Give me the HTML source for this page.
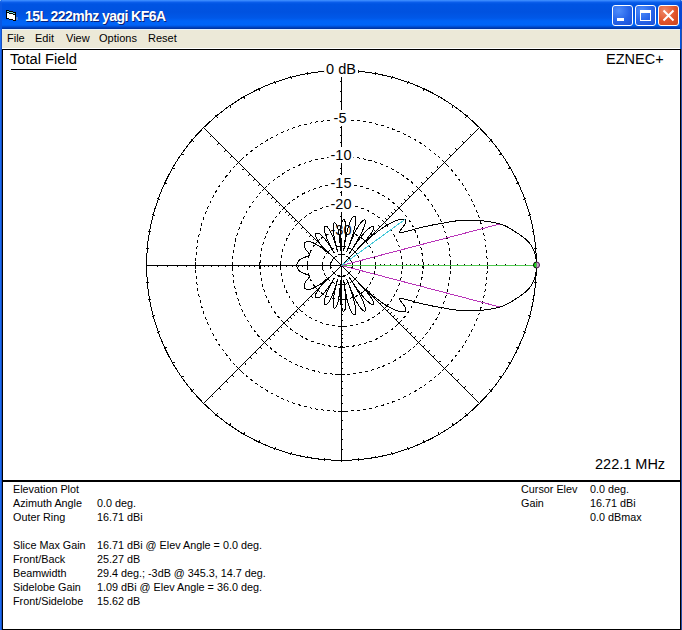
<!DOCTYPE html>
<html><head><meta charset="utf-8">
<style>
*{margin:0;padding:0;box-sizing:border-box}
html,body{width:682px;height:630px;overflow:hidden;background:#fff;font-family:"Liberation Sans",sans-serif}
.win{position:absolute;left:0;top:0;width:682px;height:630px;background:linear-gradient(to right,#1A6BF5 0,#1A6BF5 1px,#1850C0 1px,#1850C0 2px,#0054E3 2px,#0054E3 681px,#2850A8 681px)}
.title{position:absolute;left:0;top:0;width:682px;height:29px;
 background:linear-gradient(to bottom,#4596FF 0px,#2B7BFA 1px,#0A5DEA 2.5px,#0054E3 4px,#0052E0 12px,#0058E8 18px,#0063F7 21px,#0064F8 25px,#0050D8 26.5px,#003AAE 28px,#00319C 29px)}
.ttext{position:absolute;left:25px;top:8px;font:bold 14px "Liberation Sans",sans-serif;letter-spacing:-0.55px;color:#fff;white-space:nowrap;text-shadow:1px 1px 0 #0A1F77}
.menu{position:absolute;left:2px;top:29px;width:678px;height:20px;background:#ECE9D8;border-top:1px solid #E6F2FF;border-bottom:1px solid #FFFFFF}
.mi{position:absolute;top:2px;font-size:11px;color:#000;white-space:nowrap}
.plot{position:absolute;left:2px;top:49px;width:679px;height:433px;background:#fff;border:1px solid #000;border-right-width:1px}
.info{position:absolute;left:2px;top:480px;width:679px;height:150px;background:#fff;border-top:2px solid #000;border-left:1px solid #000;border-right:1px solid #000;border-bottom:1px solid #000}
.t{position:absolute;white-space:nowrap;color:#000}
.s11{font-size:10.8px}
.lab{position:absolute;transform:translateX(-50%);font-size:14.5px;line-height:16px;background:#fff;padding:0 2px;white-space:nowrap}
.btn{position:absolute;top:5px;width:21px;height:21px;border:1px solid #fff;border-radius:3px}
</style></head><body>
<div class="win">
 <div class="title"></div>
 <svg style="position:absolute;left:0;top:0" width="24" height="24" shape-rendering="crispEdges">
  <rect x="6" y="10" width="3" height="9" fill="#000"/><rect x="9" y="11" width="4" height="9" fill="#000"/><rect x="13" y="12" width="3" height="9" fill="#000"/>
  <rect x="7" y="11" width="2" height="1" fill="#74D6DA"/><rect x="9" y="12" width="4" height="1" fill="#74D6DA"/><rect x="13" y="13" width="2" height="1" fill="#74D6DA"/>
  <rect x="7" y="13" width="2" height="5" fill="#fff"/><rect x="9" y="14" width="4" height="5" fill="#fff"/><rect x="13" y="15" width="2" height="5" fill="#fff"/>
  <rect x="16" y="17" width="2" height="3" fill="#7F97C8" opacity="0.6"/>
 </svg>
 <div style="position:absolute;left:0;top:0;width:2px;height:29px;background:linear-gradient(to bottom,#2A78F0 0,#0A58E4 3px,#0A56E0 100%)"></div>
 <div style="position:absolute;left:0;top:0;width:1px;height:1px;background:#8CBCF4"></div>
 <div style="position:absolute;left:680px;top:0;width:2px;height:29px;background:linear-gradient(to bottom,#2A70E8 0,#0848D4 3px,#0846D0 100%)"></div>
 <div style="position:absolute;left:681px;top:0;width:1px;height:1px;background:#8CBCF4"></div>
 <div class="ttext">15L 222mhz yagi KF6A</div>
 <div class="btn" style="left:612px;background:radial-gradient(circle at 30% 25%,#4F8DFB 0%,#2663E8 55%,#1A4FD6 100%)"><div style="position:absolute;left:4px;top:12px;width:7px;height:3px;background:#fff"></div></div>
 <div class="btn" style="left:635px;background:radial-gradient(circle at 30% 25%,#4F8DFB 0%,#2663E8 55%,#1A4FD6 100%)"><div style="position:absolute;left:4px;top:4px;width:11px;height:11px;border:1px solid #fff;border-top-width:3px"></div></div>
 <div class="btn" style="left:658px;background:radial-gradient(circle at 30% 25%,#F08A6A 0%,#E0542A 55%,#C9441B 100%)">
  <svg style="position:absolute;left:3px;top:3px" width="13" height="13" viewBox="0 0 13 13"><path d="M1.5 1.5L11.5 11.5M11.5 1.5L1.5 11.5" stroke="#fff" stroke-width="2"/></svg>
 </div>
 <div class="menu">
  <div class="mi" style="left:5px">File</div>
  <div class="mi" style="left:33px">Edit</div>
  <div class="mi" style="left:64px">View</div>
  <div class="mi" style="left:97px">Options</div>
  <div class="mi" style="left:146px">Reset</div>
 </div>
 <div class="plot"></div>
 <div class="info"></div>
 <svg style="position:absolute;left:0;top:0" width="682" height="630" viewBox="0 0 682 630" shape-rendering="crispEdges">
<circle cx="341.5" cy="265.5" r="195" fill="none" stroke="#000" stroke-width="1"/>
<circle cx="341.5" cy="265.5" r="145.7" fill="none" stroke="#000" stroke-width="1" stroke-dasharray="3 3"/>
<circle cx="341.5" cy="265.5" r="108.9" fill="none" stroke="#000" stroke-width="1" stroke-dasharray="3 3"/>
<circle cx="341.5" cy="265.5" r="81.4" fill="none" stroke="#000" stroke-width="1" stroke-dasharray="3 3"/>
<circle cx="341.5" cy="265.5" r="60.8" fill="none" stroke="#000" stroke-width="1" stroke-dasharray="3 3"/>
<circle cx="341.5" cy="265.5" r="34.0" fill="none" stroke="#000" stroke-width="1" stroke-dasharray="3 3"/>
<circle cx="341.5" cy="265.5" r="19.0" fill="none" stroke="#000" stroke-width="1" stroke-dasharray="3 3"/>
<circle cx="341.5" cy="265.5" r="10.6" fill="none" stroke="#000" stroke-width="1" stroke-dasharray="3 3"/>
<path d="M534.5 265.5L537.5 265.5M533.8 248.7L536.8 248.4M531.6 232.0L534.5 231.5M527.9 215.5L530.8 214.8M522.9 199.5L525.7 198.5M516.4 183.9L519.1 182.7M508.6 169.0L511.2 167.5M499.6 154.8L502.1 153.1M489.3 141.4L491.6 139.5M478.0 129.0L480.1 126.9M465.6 117.7L467.5 115.4M452.2 107.4L453.9 104.9M438.0 98.4L439.5 95.8M423.1 90.6L424.3 87.9M407.5 84.1L408.5 81.3M391.5 79.1L392.2 76.2M375.0 75.4L375.5 72.5M358.3 73.2L358.6 70.2M341.5 72.5L341.5 69.5M324.7 73.2L324.4 70.2M308.0 75.4L307.5 72.5M291.5 79.1L290.8 76.2M275.5 84.1L274.5 81.3M259.9 90.6L258.7 87.9M245.0 98.4L243.5 95.8M230.8 107.4L229.1 104.9M217.4 117.7L215.5 115.4M205.0 129.0L202.9 126.9M193.7 141.4L191.4 139.5M183.4 154.8L180.9 153.1M174.4 169.0L171.8 167.5M166.6 183.9L163.9 182.7M160.1 199.5L157.3 198.5M155.1 215.5L152.2 214.8M151.4 232.0L148.5 231.5M149.2 248.7L146.2 248.4M148.5 265.5L145.5 265.5M149.2 282.3L146.2 282.6M151.4 299.0L148.5 299.5M155.1 315.5L152.2 316.2M160.1 331.5L157.3 332.5M166.6 347.1L163.9 348.3M174.4 362.0L171.8 363.5M183.4 376.2L180.9 377.9M193.7 389.6L191.4 391.5M205.0 402.0L202.9 404.1M217.4 413.3L215.5 415.6M230.8 423.6L229.1 426.1M245.0 432.6L243.5 435.2M259.9 440.4L258.7 443.1M275.5 446.9L274.5 449.7M291.5 451.9L290.8 454.8M308.0 455.6L307.5 458.5M324.7 457.8L324.4 460.8M341.5 458.5L341.5 461.5M358.3 457.8L358.6 460.8M375.0 455.6L375.5 458.5M391.5 451.9L392.2 454.8M407.5 446.9L408.5 449.7M423.1 440.4L424.3 443.1M438.0 432.6L439.5 435.2M452.2 423.6L453.9 426.1M465.6 413.3L467.5 415.6M478.0 402.0L480.1 404.1M489.3 389.6L491.6 391.5M499.6 376.2L502.1 377.9M508.6 362.0L511.2 363.5M516.4 347.1L519.1 348.3M522.9 331.5L525.7 332.5M527.9 315.5L530.8 316.2M531.6 299.0L534.5 299.5M533.8 282.3L536.8 282.6" stroke="#000" stroke-width="1"/>
<path d="M146 265.5H537M341.5 70V461M203.6 127.6L479.4 403.4M203.6 403.4L479.4 127.6" stroke="#000" stroke-width="1"/>
<path d="M487.5 262v7M338 411.5h7M195.5 262v7M338 119.5h7M442.3 160.3L446.7 164.7M236.3 164.7L240.7 160.3M236.3 366.3L240.7 370.7M442.3 370.7L446.7 366.3M450.5 262v7M338 374.5h7M232.5 262v7M338 156.5h7M416.3 186.3L420.7 190.7M262.3 190.7L266.7 186.3M262.3 340.3L266.7 344.7M416.3 344.7L420.7 340.3M423.5 262v7M338 347.5h7M259.5 262v7M338 183.5h7M396.8 205.8L401.2 210.2M281.8 210.2L286.2 205.8M281.8 320.8L286.2 325.2M396.8 325.2L401.2 320.8M402.5 262v7M338 326.5h7M280.5 262v7M338 204.5h7M382.3 220.3L386.7 224.7M296.3 224.7L300.7 220.3M296.3 306.3L300.7 310.7M382.3 310.7L386.7 306.3M375.5 262v7M338 299.5h7M307.5 262v7M338 231.5h7M363.3 239.3L367.7 243.7M315.3 243.7L319.7 239.3M315.3 287.3L319.7 291.7M363.3 291.7L367.7 287.3M360.5 262v7M338 284.5h7M322.5 262v7M338 246.5h7M352.7 249.9L357.1 254.3M325.9 254.3L330.3 249.9M325.9 276.7L330.3 281.1M352.7 281.1L357.1 276.7M352.5 262v7M338 276.5h7M330.5 262v7M338 254.5h7M346.8 255.8L351.2 260.2M331.8 260.2L336.2 255.8M331.8 270.8L336.2 275.2M346.8 275.2L351.2 270.8" stroke="#000" stroke-width="1"/>
<path d="M525 264h1v1h-1zM157 266h1v1h-1zM340 81h1v1h-1zM342 449h1v1h-1zM515 264h1v1h-1zM167 266h1v1h-1zM340 91h1v1h-1zM342 439h1v1h-1zM505 264h1v1h-1zM177 266h1v1h-1zM340 101h1v1h-1zM342 429h1v1h-1zM496 264h1v1h-1zM186 266h1v1h-1zM340 110h1v1h-1zM342 420h1v1h-1zM487 264h1v1h-1zM195 266h1v1h-1zM340 119h1v1h-1zM342 411h1v1h-1zM479 264h1v1h-1zM203 266h1v1h-1zM340 127h1v1h-1zM342 403h1v1h-1zM471 264h1v1h-1zM211 266h1v1h-1zM340 135h1v1h-1zM342 395h1v1h-1zM464 264h1v1h-1zM218 266h1v1h-1zM340 142h1v1h-1zM342 388h1v1h-1zM457 264h1v1h-1zM225 266h1v1h-1zM340 149h1v1h-1zM342 381h1v1h-1zM450 264h1v1h-1zM232 266h1v1h-1zM340 156h1v1h-1zM342 374h1v1h-1zM444 264h1v1h-1zM238 266h1v1h-1zM340 162h1v1h-1zM342 368h1v1h-1zM438 264h1v1h-1zM244 266h1v1h-1zM340 168h1v1h-1zM342 362h1v1h-1zM433 264h1v1h-1zM249 266h1v1h-1zM340 173h1v1h-1zM342 357h1v1h-1zM428 264h1v1h-1zM254 266h1v1h-1zM340 178h1v1h-1zM342 352h1v1h-1zM423 264h1v1h-1zM259 266h1v1h-1zM340 183h1v1h-1zM342 347h1v1h-1zM418 264h1v1h-1zM264 266h1v1h-1zM340 188h1v1h-1zM342 342h1v1h-1zM414 264h1v1h-1zM268 266h1v1h-1zM340 192h1v1h-1zM342 338h1v1h-1zM410 264h1v1h-1zM272 266h1v1h-1zM340 196h1v1h-1zM342 334h1v1h-1zM406 264h1v1h-1zM276 266h1v1h-1zM340 200h1v1h-1zM342 330h1v1h-1zM402 264h1v1h-1zM280 266h1v1h-1zM340 204h1v1h-1zM342 326h1v1h-1zM396 264h1v1h-1zM286 266h1v1h-1zM340 210h1v1h-1zM342 320h1v1h-1zM390 264h1v1h-1zM292 266h1v1h-1zM340 216h1v1h-1zM342 314h1v1h-1zM384 264h1v1h-1zM298 266h1v1h-1zM340 222h1v1h-1zM342 308h1v1h-1zM380 264h1v1h-1zM302 266h1v1h-1zM340 226h1v1h-1zM342 304h1v1h-1zM470 134h1v1h-1zM470 134h1v1h-1zM463 142h1v1h-1zM462 141h1v1h-1zM456 149h1v1h-1zM455 148h1v1h-1zM450 155h1v1h-1zM449 154h1v1h-1zM443 161h1v1h-1zM443 161h1v1h-1zM437 167h1v1h-1zM437 166h1v1h-1zM432 173h1v1h-1zM431 172h1v1h-1zM427 178h1v1h-1zM426 177h1v1h-1zM422 183h1v1h-1zM421 182h1v1h-1zM417 187h1v1h-1zM417 187h1v1h-1zM413 192h1v1h-1zM412 191h1v1h-1zM409 196h1v1h-1zM408 195h1v1h-1zM405 200h1v1h-1zM404 199h1v1h-1zM401 203h1v1h-1zM401 203h1v1h-1zM398 207h1v1h-1zM397 206h1v1h-1zM395 210h1v1h-1zM394 209h1v1h-1zM392 213h1v1h-1zM391 212h1v1h-1zM389 216h1v1h-1zM388 215h1v1h-1zM386 219h1v1h-1zM385 218h1v1h-1zM383 221h1v1h-1zM383 221h1v1h-1zM379 226h1v1h-1zM378 225h1v1h-1zM374 230h1v1h-1zM374 230h1v1h-1zM371 234h1v1h-1zM370 233h1v1h-1zM367 237h1v1h-1zM367 237h1v1h-1zM210 136h1v1h-1zM210 136h1v1h-1zM218 143h1v1h-1zM217 144h1v1h-1zM225 150h1v1h-1zM224 151h1v1h-1zM231 156h1v1h-1zM230 157h1v1h-1zM237 163h1v1h-1zM237 163h1v1h-1zM243 169h1v1h-1zM242 169h1v1h-1zM249 174h1v1h-1zM248 175h1v1h-1zM254 179h1v1h-1zM253 180h1v1h-1zM259 184h1v1h-1zM258 185h1v1h-1zM263 189h1v1h-1zM263 189h1v1h-1zM268 193h1v1h-1zM267 194h1v1h-1zM272 197h1v1h-1zM271 198h1v1h-1zM276 201h1v1h-1zM275 202h1v1h-1zM279 205h1v1h-1zM279 205h1v1h-1zM283 208h1v1h-1zM282 209h1v1h-1zM286 211h1v1h-1zM285 212h1v1h-1zM289 214h1v1h-1zM288 215h1v1h-1zM292 217h1v1h-1zM291 218h1v1h-1zM295 220h1v1h-1zM294 221h1v1h-1zM297 223h1v1h-1zM297 223h1v1h-1zM302 227h1v1h-1zM301 228h1v1h-1zM306 232h1v1h-1zM306 232h1v1h-1zM310 235h1v1h-1zM309 236h1v1h-1zM313 239h1v1h-1zM313 239h1v1h-1zM212 396h1v1h-1zM212 396h1v1h-1zM219 388h1v1h-1zM220 389h1v1h-1zM226 381h1v1h-1zM227 382h1v1h-1zM232 375h1v1h-1zM233 376h1v1h-1zM239 369h1v1h-1zM239 369h1v1h-1zM245 363h1v1h-1zM245 364h1v1h-1zM250 357h1v1h-1zM251 358h1v1h-1zM255 352h1v1h-1zM256 353h1v1h-1zM260 347h1v1h-1zM261 348h1v1h-1zM265 343h1v1h-1zM265 343h1v1h-1zM269 338h1v1h-1zM270 339h1v1h-1zM273 334h1v1h-1zM274 335h1v1h-1zM277 330h1v1h-1zM278 331h1v1h-1zM281 327h1v1h-1zM281 327h1v1h-1zM284 323h1v1h-1zM285 324h1v1h-1zM287 320h1v1h-1zM288 321h1v1h-1zM290 317h1v1h-1zM291 318h1v1h-1zM293 314h1v1h-1zM294 315h1v1h-1zM296 311h1v1h-1zM297 312h1v1h-1zM299 309h1v1h-1zM299 309h1v1h-1zM303 304h1v1h-1zM304 305h1v1h-1zM308 300h1v1h-1zM308 300h1v1h-1zM311 296h1v1h-1zM312 297h1v1h-1zM315 293h1v1h-1zM315 293h1v1h-1zM472 394h1v1h-1zM472 394h1v1h-1zM464 387h1v1h-1zM465 386h1v1h-1zM457 380h1v1h-1zM458 379h1v1h-1zM451 374h1v1h-1zM452 373h1v1h-1zM445 367h1v1h-1zM445 367h1v1h-1zM439 361h1v1h-1zM440 361h1v1h-1zM433 356h1v1h-1zM434 355h1v1h-1zM428 351h1v1h-1zM429 350h1v1h-1zM423 346h1v1h-1zM424 345h1v1h-1zM419 341h1v1h-1zM419 341h1v1h-1zM414 337h1v1h-1zM415 336h1v1h-1zM410 333h1v1h-1zM411 332h1v1h-1zM406 329h1v1h-1zM407 328h1v1h-1zM403 325h1v1h-1zM403 325h1v1h-1zM399 322h1v1h-1zM400 321h1v1h-1zM396 319h1v1h-1zM397 318h1v1h-1zM393 316h1v1h-1zM394 315h1v1h-1zM390 313h1v1h-1zM391 312h1v1h-1zM387 310h1v1h-1zM388 309h1v1h-1zM385 307h1v1h-1zM385 307h1v1h-1zM380 303h1v1h-1zM381 302h1v1h-1zM376 298h1v1h-1zM376 298h1v1h-1zM372 295h1v1h-1zM373 294h1v1h-1zM369 291h1v1h-1zM369 291h1v1h-1z" fill="#000"/>
 </svg>
 <div class="t" style="left:10px;top:51px;font-size:14.7px">Total Field</div>
 <div style="position:absolute;left:11px;top:69px;width:66px;height:1px;background:#000"></div>
 <div class="t" style="left:606px;top:51px;font-size:14.5px">EZNEC+</div>
 <div class="t" style="left:595px;top:456px;font-size:14.5px">222.1 MHz</div>
 <div class="lab" style="left:341px;top:61px">0 dB</div>
 <div class="lab" style="left:340px;top:110px">-5</div>
 <div class="lab" style="left:341px;top:146.5px">-10</div>
 <div class="lab" style="left:341px;top:175px">-15</div>
 <div class="lab" style="left:341px;top:196px">-20</div>
 <div class="lab" style="left:341px;top:222px">-30</div>
 <svg style="position:absolute;left:0;top:0" width="682" height="630" viewBox="0 0 682 630" shape-rendering="crispEdges">
<polygon points="536.50,265.50 536.50,265.16 536.49,264.82 536.49,264.48 536.48,264.14 536.47,263.80 536.45,263.46 536.43,263.12 536.41,262.78 536.39,262.44 536.36,262.10 536.34,261.76 536.31,261.42 536.27,261.08 536.23,260.74 536.20,260.40 536.15,260.06 536.11,259.72 536.06,259.39 536.01,259.05 535.96,258.71 535.90,258.37 535.84,258.03 535.78,257.70 535.72,257.36 535.65,257.02 535.58,256.69 535.51,256.35 535.44,256.01 535.36,255.68 535.28,255.34 535.20,255.01 535.11,254.68 535.02,254.34 534.93,254.01 534.83,253.68 534.73,253.34 534.63,253.01 534.53,252.68 534.42,252.35 534.31,252.02 534.19,251.69 534.08,251.36 533.95,251.03 533.83,250.70 533.70,250.37 533.57,250.05 533.43,249.72 533.29,249.39 533.15,249.07 533.00,248.75 532.84,248.42 532.69,248.10 532.52,247.78 532.36,247.46 532.18,247.14 532.01,246.82 531.82,246.50 531.64,246.19 531.44,245.87 531.24,245.56 531.04,245.24 530.82,244.93 530.60,244.62 530.38,244.31 530.14,244.01 529.90,243.70 529.65,243.40 529.40,243.09 529.14,242.79 528.88,242.49 528.61,242.19 528.34,241.90 528.06,241.60 527.78,241.31 527.49,241.01 527.21,240.72 526.91,240.43 526.61,240.14 526.31,239.86 526.00,239.57 525.69,239.29 525.38,239.00 525.06,238.72 524.73,238.44 524.41,238.16 524.08,237.89 523.74,237.61 523.40,237.34 523.06,237.07 522.71,236.80 522.36,236.53 522.01,236.26 521.65,236.00 521.29,235.74 520.93,235.47 520.56,235.21 520.19,234.96 519.82,234.70 519.44,234.44 519.07,234.19 518.69,233.94 518.30,233.69 517.92,233.44 517.53,233.19 517.14,232.95 516.75,232.70 516.36,232.46 515.97,232.22 515.58,231.98 515.19,231.74 514.81,231.50 514.43,231.26 514.05,231.02 513.67,230.78 513.29,230.55 512.92,230.31 512.54,230.08 512.17,229.84 511.80,229.61 511.43,229.38 511.06,229.15 510.68,228.92 510.31,228.69 509.93,228.47 509.56,228.24 509.18,228.02 508.80,227.80 508.42,227.58 508.03,227.36 507.64,227.14 507.24,226.93 506.84,226.72 506.44,226.51 506.03,226.30 505.61,226.10 505.19,225.90 504.75,225.70 504.31,225.51 503.86,225.32 503.40,225.13 502.94,224.95 502.46,224.77 501.96,224.60 501.46,224.43 500.94,224.27 500.41,224.11 499.87,223.95 499.31,223.80 498.75,223.66 498.19,223.51 497.63,223.37 497.06,223.24 496.48,223.10 495.91,222.97 495.33,222.84 494.75,222.71 494.16,222.59 493.57,222.47 492.98,222.35 492.38,222.24 491.78,222.12 491.18,222.02 490.57,221.91 489.96,221.81 489.35,221.71 488.73,221.61 488.11,221.52 487.48,221.42 486.86,221.34 486.23,221.25 485.59,221.17 484.96,221.09 484.32,221.02 483.67,220.95 483.03,220.88 482.38,220.81 481.72,220.75 481.07,220.69 480.41,220.63 479.74,220.58 479.08,220.53 478.41,220.49 477.74,220.44 477.06,220.40 476.39,220.37 475.71,220.33 475.02,220.31 474.33,220.28 473.64,220.26 472.95,220.24 472.26,220.22 471.56,220.21 470.86,220.20 470.15,220.19 469.45,220.19 468.74,220.19 468.02,220.20 467.31,220.21 466.59,220.22 465.87,220.23 465.14,220.25 464.42,220.28 463.69,220.30 462.96,220.33 462.22,220.36 461.49,220.40 460.73,220.45 459.95,220.51 459.13,220.58 458.30,220.67 457.44,220.76 456.55,220.87 455.65,220.99 454.74,221.12 453.81,221.26 452.87,221.40 451.93,221.55 450.98,221.71 450.03,221.87 449.08,222.04 448.13,222.20 447.19,222.37 446.25,222.54 445.33,222.70 444.42,222.87 443.52,223.03 442.64,223.19 441.78,223.35 440.95,223.49 440.13,223.63 439.35,223.76 438.58,223.89 437.81,224.02 437.03,224.16 436.26,224.30 435.49,224.43 434.73,224.58 433.96,224.72 433.19,224.87 432.42,225.02 431.65,225.17 430.89,225.33 430.13,225.48 429.36,225.64 428.60,225.81 427.84,225.97 427.08,226.14 426.33,226.30 425.57,226.47 424.82,226.65 424.07,226.82 423.32,227.00 422.58,227.17 421.84,227.35 421.10,227.53 420.36,227.72 419.63,227.90 418.90,228.08 418.17,228.27 417.45,228.45 416.74,228.64 416.03,228.83 415.33,229.01 414.64,229.19 413.95,229.38 413.28,229.56 412.61,229.74 411.95,229.91 411.30,230.09 410.66,230.26 410.03,230.43 409.41,230.60 408.80,230.76 408.21,230.92 407.63,231.08 407.06,231.23 406.50,231.37 405.96,231.51 405.44,231.65 404.93,231.77 404.44,231.89 403.97,232.00 403.52,232.10 403.10,232.19 402.69,232.27 402.31,232.34 401.96,232.40 401.63,232.44 401.32,232.48 401.05,232.49 400.80,232.49 400.58,232.48 400.39,232.45 400.22,232.41 400.09,232.35 399.98,232.28 399.90,232.19 399.84,232.09 399.81,231.97 399.81,231.84 399.83,231.69 399.87,231.53 399.93,231.36 400.01,231.17 400.10,230.98 400.22,230.78 400.34,230.56 400.48,230.34 400.63,230.11 400.80,229.87 400.97,229.63 401.14,229.38 401.33,229.13 401.51,228.87 401.71,228.61 401.90,228.34 402.10,228.07 402.29,227.81 402.49,227.54 402.69,227.26 402.88,226.99 403.08,226.72 403.27,226.45 403.46,226.18 403.64,225.91 403.82,225.64 403.99,225.38 404.16,225.12 404.33,224.86 404.48,224.60 404.64,224.34 404.78,224.09 404.92,223.84 405.05,223.60 405.17,223.36 405.28,223.12 405.39,222.89 405.49,222.67 405.57,222.44 405.65,222.23 405.72,222.02 405.78,221.81 405.83,221.62 405.87,221.42 405.90,221.24 405.92,221.06 405.93,220.89 405.93,220.72 405.92,220.56 405.89,220.41 405.86,220.27 405.81,220.13 405.75,220.01 405.68,219.89 405.60,219.78 405.50,219.68 405.39,219.59 405.27,219.51 405.14,219.43 404.99,219.37 404.83,219.32 404.67,219.27 404.50,219.22 404.32,219.18 404.14,219.15 403.95,219.12 403.75,219.10 403.55,219.08 403.34,219.07 403.13,219.06 402.91,219.06 402.68,219.06 402.44,219.07 402.20,219.09 401.96,219.11 401.71,219.13 401.45,219.17 401.18,219.20 400.91,219.25 400.64,219.30 400.36,219.35 400.07,219.41 399.77,219.48 399.47,219.55 399.17,219.63 398.86,219.71 398.54,219.80 398.22,219.90 397.89,220.00 397.56,220.11 397.22,220.22 396.87,220.34 396.52,220.47 396.16,220.60 395.80,220.74 395.43,220.88 395.06,221.03 394.68,221.19 394.30,221.36 393.90,221.53 393.51,221.70 393.11,221.89 392.70,222.08 392.28,222.28 391.86,222.48 391.44,222.70 391.01,222.92 390.57,223.14 390.13,223.38 389.68,223.62 389.22,223.87 388.76,224.13 388.29,224.40 387.81,224.67 387.33,224.95 386.84,225.24 386.34,225.55 385.84,225.86 385.33,226.18 384.81,226.50 384.28,226.84 383.75,227.19 383.20,227.55 382.65,227.93 382.08,228.31 381.51,228.71 380.93,229.12 380.33,229.54 379.73,229.98 379.11,230.43 378.48,230.90 377.83,231.38 377.17,231.88 376.49,232.41 375.80,232.95 375.09,233.52 374.35,234.11 373.59,234.73 372.80,235.38 371.99,236.06 371.14,236.78 370.25,237.54 369.32,238.35 368.33,239.22 367.29,240.16 366.16,241.18 364.94,242.31 363.58,243.57 362.06,245.01 360.28,246.72 358.08,248.86 355.09,251.82 351.46,255.43 354.96,251.85 357.78,248.94 359.76,246.85 361.31,245.20 362.59,243.81 363.67,242.62 364.62,241.56 365.45,240.61 366.20,239.75 366.87,238.96 367.48,238.22 368.03,237.54 368.54,236.91 369.01,236.31 369.44,235.75 369.84,235.22 370.20,234.72 370.54,234.25 370.86,233.80 371.15,233.37 371.42,232.96 371.67,232.58 371.90,232.21 372.11,231.86 372.31,231.52 372.49,231.20 372.66,230.89 372.81,230.60 372.95,230.32 373.08,230.06 373.19,229.81 373.29,229.56 373.38,229.33 373.46,229.12 373.53,228.91 373.59,228.71 373.64,228.52 373.69,228.34 373.72,228.18 373.74,228.02 373.76,227.87 373.76,227.73 373.76,227.59 373.75,227.47 373.74,227.35 373.71,227.25 373.68,227.15 373.64,227.06 373.60,226.98 373.55,226.90 373.49,226.83 373.42,226.78 373.35,226.72 373.27,226.68 373.19,226.64 373.10,226.62 373.01,226.59 372.90,226.58 372.80,226.57 372.69,226.57 372.57,226.58 372.45,226.60 372.32,226.62 372.18,226.65 372.04,226.69 371.90,226.73 371.75,226.78 371.59,226.84 371.43,226.91 371.26,226.99 371.09,227.07 370.91,227.17 370.73,227.27 370.54,227.38 370.34,227.50 370.14,227.63 369.93,227.77 369.72,227.91 369.50,228.07 369.27,228.24 369.04,228.41 368.80,228.60 368.56,228.80 368.30,229.01 368.04,229.23 367.77,229.47 367.50,229.72 367.21,229.98 366.92,230.25 366.62,230.54 366.31,230.84 365.99,231.16 365.66,231.50 365.32,231.86 364.97,232.23 364.60,232.63 364.23,233.04 363.83,233.48 363.43,233.95 363.00,234.44 362.56,234.97 362.10,235.52 361.62,236.12 361.11,236.75 360.57,237.44 360.00,238.17 359.39,238.97 358.74,239.84 358.03,240.81 357.25,241.88 356.39,243.09 355.40,244.49 354.25,246.17 352.83,248.25 350.98,251.02 349.24,253.63 350.93,250.97 352.73,248.14 354.08,245.98 355.16,244.23 356.06,242.73 356.84,241.42 357.52,240.25 358.14,239.18 358.69,238.20 359.20,237.29 359.66,236.44 360.09,235.64 360.48,234.88 360.85,234.17 361.19,233.49 361.52,232.84 361.82,232.22 362.10,231.62 362.36,231.05 362.61,230.51 362.84,229.98 363.06,229.47 363.27,228.99 363.46,228.52 363.64,228.06 363.81,227.63 363.97,227.20 364.12,226.80 364.25,226.41 364.38,226.03 364.50,225.66 364.61,225.31 364.71,224.97 364.80,224.64 364.89,224.33 364.97,224.02 365.03,223.73 365.10,223.45 365.15,223.18 365.20,222.93 365.23,222.68 365.27,222.45 365.29,222.22 365.31,222.01 365.32,221.81 365.33,221.61 365.33,221.43 365.32,221.26 365.31,221.10 365.29,220.95 365.26,220.81 365.23,220.69 365.19,220.57 365.15,220.46 365.10,220.36 365.04,220.28 364.98,220.20 364.91,220.14 364.84,220.08 364.77,220.04 364.68,220.00 364.60,219.97 364.51,219.95 364.41,219.94 364.31,219.94 364.21,219.95 364.10,219.97 363.99,219.99 363.87,220.03 363.75,220.07 363.63,220.13 363.50,220.19 363.37,220.27 363.23,220.35 363.09,220.44 362.94,220.55 362.79,220.66 362.64,220.79 362.48,220.92 362.31,221.07 362.15,221.23 361.97,221.39 361.80,221.57 361.62,221.76 361.43,221.97 361.24,222.18 361.05,222.41 360.85,222.65 360.64,222.90 360.44,223.17 360.22,223.45 360.00,223.74 359.78,224.05 359.55,224.38 359.31,224.72 359.07,225.08 358.83,225.46 358.57,225.86 358.31,226.27 358.05,226.71 357.77,227.17 357.49,227.65 357.20,228.15 356.90,228.69 356.59,229.25 356.27,229.84 355.94,230.47 355.59,231.14 355.24,231.84 354.86,232.60 354.47,233.40 354.05,234.27 353.62,235.21 353.15,236.23 352.64,237.35 352.10,238.60 351.49,240.00 350.81,241.62 350.01,243.55 349.05,245.95 347.78,249.14 346.55,252.27 347.72,249.12 348.91,245.89 349.79,243.45 350.48,241.48 351.05,239.82 351.54,238.36 351.96,237.07 352.34,235.89 352.67,234.81 352.97,233.82 353.24,232.89 353.49,232.02 353.71,231.21 353.92,230.44 354.10,229.71 354.28,229.01 354.44,228.35 354.58,227.72 354.71,227.12 354.84,226.55 354.95,226.00 355.05,225.47 355.14,224.96 355.23,224.48 355.30,224.01 355.37,223.56 355.43,223.13 355.48,222.72 355.53,222.32 355.57,221.93 355.61,221.57 355.63,221.21 355.66,220.87 355.67,220.55 355.68,220.24 355.69,219.94 355.69,219.65 355.69,219.38 355.68,219.12 355.67,218.87 355.65,218.63 355.63,218.40 355.60,218.19 355.58,217.98 355.54,217.79 355.50,217.61 355.46,217.44 355.42,217.28 355.37,217.13 355.32,216.99 355.26,216.86 355.21,216.74 355.14,216.63 355.08,216.54 355.01,216.45 354.94,216.37 354.87,216.30 354.79,216.25 354.71,216.20 354.63,216.16 354.54,216.14 354.45,216.12 354.36,216.12 354.27,216.12 354.18,216.13 354.08,216.16 353.98,216.19 353.88,216.23 353.77,216.29 353.66,216.35 353.55,216.42 353.44,216.51 353.33,216.60 353.22,216.70 353.10,216.82 352.98,216.94 352.86,217.08 352.73,217.22 352.61,217.38 352.48,217.54 352.35,217.72 352.22,217.91 352.09,218.11 351.96,218.32 351.82,218.54 351.69,218.78 351.55,219.02 351.41,219.28 351.27,219.55 351.12,219.83 350.98,220.13 350.83,220.43 350.68,220.75 350.54,221.09 350.38,221.44 350.23,221.80 350.08,222.18 349.92,222.58 349.76,222.99 349.60,223.41 349.44,223.86 349.28,224.32 349.12,224.81 348.95,225.31 348.78,225.84 348.61,226.38 348.43,226.96 348.26,227.56 348.08,228.18 347.90,228.84 347.71,229.53 347.52,230.26 347.33,231.03 347.13,231.85 346.93,232.72 346.72,233.64 346.50,234.64 346.27,235.72 346.03,236.89 345.78,238.19 345.50,239.65 345.20,241.31 344.86,243.27 344.46,245.68 343.97,248.78 343.54,251.48 343.91,248.80 344.31,245.73 344.61,243.35 344.84,241.43 345.02,239.81 345.16,238.40 345.28,237.14 345.38,236.01 345.46,234.98 345.53,234.04 345.59,233.16 345.63,232.35 345.66,231.58 345.69,230.87 345.71,230.20 345.72,229.56 345.73,228.96 345.73,228.39 345.72,227.85 345.71,227.34 345.70,226.85 345.68,226.39 345.66,225.95 345.63,225.53 345.60,225.12 345.57,224.74 345.53,224.38 345.49,224.03 345.45,223.70 345.41,223.39 345.36,223.09 345.31,222.81 345.26,222.54 345.21,222.28 345.15,222.04 345.09,221.81 345.03,221.59 344.97,221.39 344.91,221.20 344.84,221.02 344.78,220.85 344.71,220.69 344.64,220.55 344.57,220.41 344.50,220.29 344.43,220.18 344.36,220.08 344.28,219.99 344.21,219.91 344.13,219.84 344.06,219.78 343.98,219.73 343.90,219.69 343.82,219.66 343.74,219.64 343.66,219.63 343.58,219.63 343.50,219.64 343.42,219.65 343.34,219.68 343.26,219.72 343.18,219.77 343.09,219.83 343.01,219.90 342.93,219.98 342.85,220.07 342.77,220.17 342.68,220.28 342.60,220.40 342.52,220.53 342.44,220.68 342.36,220.83 342.28,221.00 342.20,221.17 342.12,221.36 342.04,221.56 341.96,221.77 341.88,222.00 341.80,222.23 341.73,222.48 341.65,222.74 341.57,223.01 341.50,223.29 341.43,223.59 341.35,223.90 341.28,224.23 341.21,224.57 341.15,224.92 341.08,225.29 341.01,225.67 340.95,226.07 340.89,226.49 340.83,226.93 340.77,227.38 340.71,227.85 340.66,228.35 340.60,228.86 340.55,229.40 340.51,229.96 340.46,230.55 340.42,231.17 340.38,231.82 340.35,232.51 340.32,233.23 340.29,233.99 340.27,234.81 340.25,235.68 340.24,236.61 340.23,237.62 340.24,238.72 340.25,239.93 340.27,241.28 340.31,242.82 340.37,244.62 340.45,246.79 340.57,249.42 340.66,251.36 340.52,249.45 340.33,246.85 340.16,244.72 340.00,242.96 339.86,241.47 339.73,240.16 339.60,239.00 339.48,237.96 339.36,237.01 339.24,236.13 339.12,235.32 339.01,234.57 338.90,233.86 338.79,233.20 338.68,232.58 338.57,232.00 338.46,231.44 338.35,230.92 338.25,230.42 338.14,229.95 338.03,229.50 337.93,229.08 337.82,228.67 337.72,228.29 337.62,227.92 337.51,227.57 337.41,227.23 337.31,226.92 337.21,226.62 337.11,226.33 337.01,226.06 336.91,225.80 336.81,225.55 336.71,225.32 336.61,225.09 336.51,224.89 336.42,224.69 336.32,224.50 336.23,224.33 336.13,224.16 336.04,224.01 335.94,223.87 335.85,223.73 335.76,223.61 335.67,223.50 335.58,223.39 335.49,223.30 335.41,223.21 335.32,223.14 335.23,223.07 335.15,223.02 335.07,222.97 334.99,222.93 334.90,222.90 334.82,222.87 334.75,222.86 334.67,222.85 334.59,222.86 334.52,222.87 334.45,222.89 334.38,222.93 334.31,222.96 334.24,223.01 334.17,223.07 334.11,223.14 334.04,223.21 333.98,223.29 333.92,223.38 333.86,223.48 333.81,223.59 333.75,223.71 333.70,223.84 333.65,223.97 333.61,224.12 333.56,224.27 333.52,224.43 333.48,224.60 333.44,224.78 333.40,224.97 333.37,225.17 333.34,225.38 333.31,225.60 333.28,225.83 333.26,226.06 333.24,226.31 333.22,226.57 333.21,226.84 333.20,227.12 333.19,227.41 333.19,227.71 333.19,228.02 333.19,228.34 333.20,228.68 333.21,229.03 333.23,229.39 333.25,229.77 333.28,230.16 333.31,230.57 333.34,230.99 333.38,231.43 333.43,231.89 333.48,232.36 333.54,232.86 333.61,233.38 333.68,233.92 333.77,234.49 333.86,235.08 333.96,235.70 334.07,236.36 334.20,237.06 334.33,237.79 334.49,238.58 334.66,239.42 334.85,240.33 335.07,241.32 335.31,242.40 335.59,243.61 335.92,244.98 336.32,246.56 336.79,248.41 337.35,250.52 337.69,251.86 337.30,250.54 336.68,248.47 336.13,246.65 335.65,245.11 335.23,243.79 334.85,242.63 334.51,241.59 334.19,240.65 333.89,239.80 333.60,239.01 333.33,238.28 333.08,237.60 332.83,236.96 332.59,236.36 332.36,235.80 332.14,235.26 331.93,234.76 331.72,234.28 331.51,233.83 331.32,233.39 331.12,232.98 330.93,232.59 330.75,232.21 330.57,231.86 330.39,231.51 330.22,231.19 330.05,230.87 329.88,230.57 329.72,230.29 329.56,230.02 329.40,229.75 329.25,229.50 329.09,229.27 328.94,229.04 328.80,228.82 328.65,228.61 328.51,228.41 328.37,228.23 328.24,228.05 328.10,227.88 327.97,227.71 327.84,227.56 327.71,227.42 327.59,227.28 327.47,227.15 327.35,227.03 327.23,226.92 327.11,226.81 327.00,226.71 326.89,226.62 326.78,226.54 326.67,226.46 326.56,226.39 326.46,226.32 326.36,226.27 326.26,226.22 326.17,226.17 326.07,226.13 325.98,226.10 325.89,226.08 325.80,226.06 325.72,226.04 325.64,226.04 325.55,226.03 325.48,226.04 325.40,226.05 325.33,226.07 325.26,226.09 325.19,226.12 325.12,226.15 325.06,226.19 324.99,226.23 324.93,226.28 324.88,226.34 324.82,226.40 324.77,226.47 324.72,226.54 324.68,226.62 324.63,226.71 324.59,226.80 324.55,226.90 324.52,227.00 324.49,227.11 324.46,227.22 324.43,227.34 324.41,227.46 324.39,227.60 324.37,227.73 324.35,227.87 324.34,228.02 324.33,228.18 324.33,228.33 324.33,228.50 324.33,228.67 324.33,228.85 324.34,229.03 324.35,229.22 324.37,229.42 324.38,229.62 324.41,229.82 324.43,230.04 324.46,230.26 324.50,230.48 324.54,230.72 324.58,230.96 324.62,231.20 324.68,231.46 324.73,231.72 324.79,231.99 324.86,232.26 324.93,232.55 325.00,232.84 325.08,233.14 325.17,233.45 325.26,233.76 325.36,234.09 325.46,234.42 325.57,234.77 325.69,235.13 325.81,235.49 325.94,235.87 326.08,236.26 326.23,236.66 326.39,237.08 326.55,237.51 326.73,237.95 326.92,238.42 327.12,238.90 327.33,239.40 327.55,239.92 327.79,240.47 328.05,241.04 328.33,241.64 328.63,242.28 328.95,242.95 329.30,243.67 329.68,244.44 330.10,245.27 330.57,246.18 331.09,247.18 331.69,248.29 332.37,249.55 333.15,250.98 333.96,252.45 334.40,253.24 333.92,252.48 333.06,251.06 332.23,249.69 331.48,248.49 330.82,247.44 330.23,246.51 329.69,245.68 329.19,244.93 328.73,244.24 328.29,243.61 327.88,243.02 327.50,242.47 327.13,241.96 326.78,241.48 326.44,241.03 326.12,240.60 325.81,240.20 325.51,239.82 325.22,239.45 324.94,239.11 324.67,238.78 324.41,238.47 324.15,238.17 323.91,237.88 323.66,237.61 323.43,237.35 323.20,237.10 322.98,236.86 322.76,236.64 322.54,236.42 322.33,236.21 322.13,236.01 321.93,235.82 321.74,235.64 321.55,235.47 321.36,235.30 321.18,235.14 321.00,234.99 320.82,234.85 320.65,234.71 320.48,234.58 320.32,234.45 320.16,234.33 320.00,234.22 319.85,234.11 319.70,234.01 319.55,233.92 319.40,233.83 319.26,233.74 319.12,233.66 318.99,233.59 318.86,233.52 318.73,233.46 318.60,233.40 318.48,233.34 318.36,233.29 318.24,233.25 318.12,233.20 318.01,233.17 317.90,233.14 317.79,233.11 317.69,233.08 317.59,233.06 317.49,233.05 317.39,233.04 317.30,233.03 317.20,233.02 317.12,233.02 317.03,233.03 316.95,233.03 316.87,233.05 316.79,233.06 316.71,233.08 316.64,233.10 316.57,233.13 316.50,233.16 316.44,233.19 316.37,233.22 316.31,233.26 316.26,233.31 316.20,233.35 316.15,233.40 316.10,233.45 316.05,233.51 316.01,233.57 315.97,233.63 315.93,233.70 315.89,233.76 315.86,233.84 315.83,233.91 315.80,233.99 315.78,234.07 315.75,234.16 315.73,234.24 315.72,234.33 315.70,234.43 315.69,234.53 315.69,234.63 315.68,234.73 315.68,234.84 315.68,234.95 315.68,235.06 315.69,235.17 315.70,235.29 315.71,235.41 315.73,235.54 315.75,235.67 315.77,235.80 315.80,235.93 315.83,236.07 315.86,236.21 315.89,236.35 315.93,236.50 315.98,236.65 316.02,236.80 316.07,236.96 316.12,237.12 316.18,237.28 316.24,237.45 316.31,237.62 316.38,237.79 316.45,237.97 316.52,238.15 316.60,238.33 316.69,238.52 316.78,238.71 316.87,238.90 316.97,239.10 317.07,239.30 317.18,239.51 317.29,239.72 317.41,239.94 317.53,240.16 317.66,240.38 317.79,240.61 317.93,240.84 318.08,241.08 318.23,241.32 318.39,241.57 318.55,241.82 318.72,242.08 318.90,242.34 319.08,242.61 319.28,242.89 319.48,243.17 319.69,243.46 319.91,243.76 320.13,244.06 320.37,244.37 320.62,244.69 320.88,245.02 321.15,245.36 321.43,245.71 321.73,246.07 322.04,246.45 322.37,246.83 322.71,247.23 323.07,247.64 323.45,248.07 323.84,248.51 324.26,248.96 324.69,249.44 325.14,249.92 325.61,250.42 326.08,250.91 326.54,251.40 326.96,251.85 327.31,252.23 327.55,252.49 327.61,252.60 327.49,252.53 327.21,252.31 326.80,251.98 326.32,251.59 325.80,251.17 325.28,250.74 324.75,250.31 324.23,249.90 323.73,249.50 323.25,249.12 322.78,248.76 322.33,248.42 321.89,248.09 321.47,247.78 321.06,247.48 320.67,247.20 320.29,246.93 319.92,246.68 319.56,246.43 319.22,246.20 318.88,245.97 318.55,245.76 318.23,245.55 317.91,245.36 317.61,245.17 317.31,244.99 317.02,244.81 316.74,244.65 316.46,244.49 316.19,244.34 315.92,244.19 315.66,244.05 315.41,243.91 315.16,243.78 314.91,243.66 314.67,243.54 314.43,243.43 314.20,243.32 313.98,243.21 313.75,243.11 313.53,243.01 313.32,242.92 313.11,242.83 312.90,242.75 312.69,242.67 312.49,242.59 312.30,242.52 312.10,242.45 311.91,242.38 311.72,242.32 311.54,242.26 311.36,242.20 311.18,242.15 311.00,242.10 310.83,242.05 310.66,242.01 310.49,241.97 310.33,241.93 310.17,241.89 310.01,241.86 309.85,241.83 309.70,241.80 309.55,241.77 309.40,241.75 309.25,241.73 309.11,241.71 308.97,241.69 308.83,241.68 308.69,241.66 308.56,241.65 308.43,241.65 308.30,241.64 308.17,241.64 308.04,241.64 307.92,241.64 307.80,241.64 307.68,241.64 307.57,241.65 307.45,241.66 307.34,241.67 307.23,241.68 307.12,241.69 307.01,241.71 306.91,241.73 306.81,241.75 306.71,241.77 306.61,241.79 306.51,241.81 306.42,241.84 306.33,241.87 306.24,241.89 306.15,241.92 306.06,241.96 305.98,241.99 305.90,242.02 305.82,242.06 305.74,242.10 305.66,242.14 305.59,242.18 305.51,242.22 305.44,242.26 305.37,242.31 305.31,242.35 305.24,242.40 305.18,242.45 305.11,242.50 305.05,242.55 305.00,242.60 304.94,242.65 304.88,242.71 304.83,242.76 304.78,242.82 304.73,242.88 304.68,242.94 304.64,243.00 304.59,243.06 304.55,243.12 304.51,243.19 304.47,243.25 304.44,243.32 304.40,243.38 304.37,243.45 304.34,243.52 304.31,243.59 304.28,243.66 304.25,243.73 304.23,243.81 304.21,243.88 304.19,243.96 304.17,244.03 304.15,244.11 304.13,244.19 304.12,244.26 304.11,244.34 304.10,244.42 304.09,244.50 304.08,244.59 304.07,244.67 304.07,244.75 304.07,244.84 304.07,244.92 304.07,245.01 304.07,245.09 304.08,245.18 304.08,245.27 304.09,245.36 304.10,245.45 304.11,245.54 304.12,245.63 304.14,245.72 304.15,245.81 304.17,245.90 304.19,246.00 304.21,246.09 304.23,246.18 304.26,246.28 304.28,246.37 304.31,246.47 304.34,246.57 304.37,246.66 304.40,246.76 304.44,246.86 304.47,246.96 304.51,247.06 304.55,247.16 304.59,247.26 304.63,247.36 304.67,247.46 304.72,247.56 304.76,247.66 304.81,247.76 304.86,247.87 304.91,247.97 304.96,248.07 305.02,248.18 305.07,248.28 305.13,248.39 305.19,248.49 305.25,248.60 305.31,248.70 305.37,248.81 305.44,248.91 305.50,249.02 305.57,249.12 305.64,249.23 305.70,249.34 305.78,249.44 305.85,249.55 305.92,249.66 305.99,249.77 306.07,249.87 306.15,249.98 306.22,250.09 306.30,250.20 306.38,250.30 306.47,250.41 306.55,250.52 306.63,250.63 306.71,250.73 306.80,250.84 306.89,250.95 306.97,251.06 307.06,251.16 307.15,251.27 307.24,251.38 307.32,251.48 307.41,251.59 307.50,251.70 307.59,251.80 307.69,251.91 307.78,252.01 307.87,252.12 307.96,252.22 308.05,252.32 308.14,252.43 308.23,252.53 308.32,252.63 308.41,252.73 308.49,252.83 308.58,252.93 308.67,253.03 308.75,253.13 308.84,253.22 308.92,253.32 309.00,253.41 309.08,253.51 309.15,253.60 309.23,253.69 309.30,253.78 309.37,253.87 309.44,253.96 309.50,254.04 309.56,254.13 309.62,254.21 309.68,254.29 309.73,254.37 309.77,254.45 309.82,254.53 309.86,254.60 309.89,254.68 309.92,254.75 309.95,254.82 309.97,254.89 309.99,254.96 310.00,255.02 310.00,255.08 310.00,255.14 310.00,255.20 309.99,255.26 309.98,255.32 309.96,255.37 309.93,255.43 309.90,255.48 309.87,255.53 309.83,255.57 309.78,255.62 309.73,255.67 309.68,255.71 309.62,255.75 309.55,255.79 309.48,255.83 309.41,255.87 309.33,255.91 309.25,255.95 309.17,255.98 309.08,256.02 308.99,256.05 308.89,256.09 308.80,256.12 308.70,256.16 308.59,256.19 308.49,256.22 308.38,256.25 308.27,256.28 308.15,256.31 308.04,256.35 307.92,256.38 307.80,256.41 307.68,256.44 307.56,256.47 307.44,256.50 307.32,256.53 307.19,256.56 307.07,256.60 306.94,256.63 306.82,256.66 306.69,256.69 306.56,256.72 306.44,256.76 306.31,256.79 306.18,256.83 306.05,256.86 305.93,256.89 305.80,256.93 305.67,256.96 305.55,257.00 305.42,257.04 305.29,257.07 305.17,257.11 305.04,257.15 304.92,257.19 304.79,257.23 304.67,257.27 304.54,257.31 304.42,257.35 304.30,257.39 304.18,257.43 304.06,257.47 303.94,257.52 303.82,257.56 303.70,257.60 303.58,257.65 303.46,257.69 303.35,257.74 303.23,257.78 303.12,257.83 303.01,257.88 302.89,257.93 302.78,257.97 302.67,258.02 302.56,258.07 302.46,258.12 302.35,258.17 302.24,258.22 302.14,258.28 302.03,258.33 301.93,258.38 301.83,258.43 301.73,258.49 301.62,258.54 301.53,258.60 301.43,258.65 301.33,258.71 301.23,258.76 301.14,258.82 301.05,258.88 300.95,258.93 300.86,258.99 300.77,259.05 300.68,259.11 300.59,259.17 300.50,259.23 300.42,259.29 300.33,259.35 300.25,259.41 300.16,259.47 300.08,259.53 300.00,259.59 299.92,259.66 299.84,259.72 299.76,259.78 299.68,259.85 299.61,259.91 299.53,259.97 299.46,260.04 299.38,260.10 299.31,260.17 299.24,260.24 299.17,260.30 299.10,260.37 299.04,260.44 298.97,260.50 298.90,260.57 298.84,260.64 298.77,260.71 298.71,260.78 298.65,260.85 298.59,260.91 298.53,260.98 298.47,261.05 298.41,261.12 298.36,261.19 298.30,261.26 298.25,261.34 298.19,261.41 298.14,261.48 298.09,261.55 298.04,261.62 297.99,261.69 297.94,261.77 297.89,261.84 297.85,261.91 297.80,261.98 297.76,262.06 297.71,262.13 297.67,262.20 297.63,262.28 297.59,262.35 297.55,262.43 297.51,262.50 297.47,262.58 297.44,262.65 297.40,262.73 297.37,262.80 297.33,262.88 297.30,262.95 297.27,263.03 297.24,263.10 297.21,263.18 297.18,263.25 297.15,263.33 297.13,263.41 297.10,263.48 297.08,263.56 297.05,263.64 297.03,263.71 297.01,263.79 296.99,263.87 296.97,263.94 296.95,264.02 296.93,264.10 296.92,264.18 296.90,264.25 296.88,264.33 296.87,264.41 296.86,264.49 296.85,264.56 296.83,264.64 296.82,264.72 296.81,264.80 296.81,264.88 296.80,264.95 296.79,265.03 296.79,265.11 296.78,265.19 296.78,265.27 296.78,265.34 296.78,265.42 296.78,265.50 296.78,265.58 296.78,265.66 296.78,265.73 296.78,265.81 296.79,265.89 296.79,265.97 296.80,266.05 296.81,266.12 296.81,266.20 296.82,266.28 296.83,266.36 296.85,266.44 296.86,266.51 296.87,266.59 296.88,266.67 296.90,266.75 296.92,266.82 296.93,266.90 296.95,266.98 296.97,267.06 296.99,267.13 297.01,267.21 297.03,267.29 297.05,267.36 297.08,267.44 297.10,267.52 297.13,267.59 297.15,267.67 297.18,267.75 297.21,267.82 297.24,267.90 297.27,267.97 297.30,268.05 297.33,268.12 297.37,268.20 297.40,268.27 297.44,268.35 297.47,268.42 297.51,268.50 297.55,268.57 297.59,268.65 297.63,268.72 297.67,268.80 297.71,268.87 297.76,268.94 297.80,269.02 297.85,269.09 297.89,269.16 297.94,269.23 297.99,269.31 298.04,269.38 298.09,269.45 298.14,269.52 298.19,269.59 298.25,269.66 298.30,269.74 298.36,269.81 298.41,269.88 298.47,269.95 298.53,270.02 298.59,270.09 298.65,270.15 298.71,270.22 298.77,270.29 298.84,270.36 298.90,270.43 298.97,270.50 299.04,270.56 299.10,270.63 299.17,270.70 299.24,270.76 299.31,270.83 299.38,270.90 299.46,270.96 299.53,271.03 299.61,271.09 299.68,271.15 299.76,271.22 299.84,271.28 299.92,271.34 300.00,271.41 300.08,271.47 300.16,271.53 300.25,271.59 300.33,271.65 300.42,271.71 300.50,271.77 300.59,271.83 300.68,271.89 300.77,271.95 300.86,272.01 300.95,272.07 301.05,272.12 301.14,272.18 301.23,272.24 301.33,272.29 301.43,272.35 301.53,272.40 301.62,272.46 301.73,272.51 301.83,272.57 301.93,272.62 302.03,272.67 302.14,272.72 302.24,272.78 302.35,272.83 302.46,272.88 302.56,272.93 302.67,272.98 302.78,273.03 302.89,273.07 303.01,273.12 303.12,273.17 303.23,273.22 303.35,273.26 303.46,273.31 303.58,273.35 303.70,273.40 303.82,273.44 303.94,273.48 304.06,273.53 304.18,273.57 304.30,273.61 304.42,273.65 304.54,273.69 304.67,273.73 304.79,273.77 304.92,273.81 305.04,273.85 305.17,273.89 305.29,273.93 305.42,273.96 305.55,274.00 305.67,274.04 305.80,274.07 305.93,274.11 306.05,274.14 306.18,274.17 306.31,274.21 306.44,274.24 306.56,274.28 306.69,274.31 306.82,274.34 306.94,274.37 307.07,274.40 307.19,274.44 307.32,274.47 307.44,274.50 307.56,274.53 307.68,274.56 307.80,274.59 307.92,274.62 308.04,274.65 308.15,274.69 308.27,274.72 308.38,274.75 308.49,274.78 308.59,274.81 308.70,274.84 308.80,274.88 308.89,274.91 308.99,274.95 309.08,274.98 309.17,275.02 309.25,275.05 309.33,275.09 309.41,275.13 309.48,275.17 309.55,275.21 309.62,275.25 309.68,275.29 309.73,275.33 309.78,275.38 309.83,275.43 309.87,275.47 309.90,275.52 309.93,275.57 309.96,275.63 309.98,275.68 309.99,275.74 310.00,275.80 310.00,275.86 310.00,275.92 310.00,275.98 309.99,276.04 309.97,276.11 309.95,276.18 309.92,276.25 309.89,276.32 309.86,276.40 309.82,276.47 309.77,276.55 309.73,276.63 309.68,276.71 309.62,276.79 309.56,276.87 309.50,276.96 309.44,277.04 309.37,277.13 309.30,277.22 309.23,277.31 309.15,277.40 309.08,277.49 309.00,277.59 308.92,277.68 308.84,277.78 308.75,277.87 308.67,277.97 308.58,278.07 308.49,278.17 308.41,278.27 308.32,278.37 308.23,278.47 308.14,278.57 308.05,278.68 307.96,278.78 307.87,278.88 307.78,278.99 307.69,279.09 307.59,279.20 307.50,279.30 307.41,279.41 307.32,279.52 307.24,279.62 307.15,279.73 307.06,279.84 306.97,279.94 306.89,280.05 306.80,280.16 306.71,280.27 306.63,280.37 306.55,280.48 306.47,280.59 306.38,280.70 306.30,280.80 306.22,280.91 306.15,281.02 306.07,281.13 305.99,281.23 305.92,281.34 305.85,281.45 305.78,281.56 305.70,281.66 305.64,281.77 305.57,281.88 305.50,281.98 305.44,282.09 305.37,282.19 305.31,282.30 305.25,282.40 305.19,282.51 305.13,282.61 305.07,282.72 305.02,282.82 304.96,282.93 304.91,283.03 304.86,283.13 304.81,283.24 304.76,283.34 304.72,283.44 304.67,283.54 304.63,283.64 304.59,283.74 304.55,283.84 304.51,283.94 304.47,284.04 304.44,284.14 304.40,284.24 304.37,284.34 304.34,284.43 304.31,284.53 304.28,284.63 304.26,284.72 304.23,284.82 304.21,284.91 304.19,285.00 304.17,285.10 304.15,285.19 304.14,285.28 304.12,285.37 304.11,285.46 304.10,285.55 304.09,285.64 304.08,285.73 304.08,285.82 304.07,285.91 304.07,285.99 304.07,286.08 304.07,286.16 304.07,286.25 304.07,286.33 304.08,286.41 304.09,286.50 304.10,286.58 304.11,286.66 304.12,286.74 304.13,286.81 304.15,286.89 304.17,286.97 304.19,287.04 304.21,287.12 304.23,287.19 304.25,287.27 304.28,287.34 304.31,287.41 304.34,287.48 304.37,287.55 304.40,287.62 304.44,287.68 304.47,287.75 304.51,287.81 304.55,287.88 304.59,287.94 304.64,288.00 304.68,288.06 304.73,288.12 304.78,288.18 304.83,288.24 304.88,288.29 304.94,288.35 305.00,288.40 305.05,288.45 305.11,288.50 305.18,288.55 305.24,288.60 305.31,288.65 305.37,288.69 305.44,288.74 305.51,288.78 305.59,288.82 305.66,288.86 305.74,288.90 305.82,288.94 305.90,288.98 305.98,289.01 306.06,289.04 306.15,289.08 306.24,289.11 306.33,289.13 306.42,289.16 306.51,289.19 306.61,289.21 306.71,289.23 306.81,289.25 306.91,289.27 307.01,289.29 307.12,289.31 307.23,289.32 307.34,289.33 307.45,289.34 307.57,289.35 307.68,289.36 307.80,289.36 307.92,289.36 308.04,289.36 308.17,289.36 308.30,289.36 308.43,289.35 308.56,289.35 308.69,289.34 308.83,289.32 308.97,289.31 309.11,289.29 309.25,289.27 309.40,289.25 309.55,289.23 309.70,289.20 309.85,289.17 310.01,289.14 310.17,289.11 310.33,289.07 310.49,289.03 310.66,288.99 310.83,288.95 311.00,288.90 311.18,288.85 311.36,288.80 311.54,288.74 311.72,288.68 311.91,288.62 312.10,288.55 312.30,288.48 312.49,288.41 312.69,288.33 312.90,288.25 313.11,288.17 313.32,288.08 313.53,287.99 313.75,287.89 313.98,287.79 314.20,287.68 314.43,287.57 314.67,287.46 314.91,287.34 315.16,287.22 315.41,287.09 315.66,286.95 315.92,286.81 316.19,286.66 316.46,286.51 316.74,286.35 317.02,286.19 317.31,286.01 317.61,285.83 317.91,285.64 318.23,285.45 318.55,285.24 318.88,285.03 319.22,284.80 319.56,284.57 319.92,284.32 320.29,284.07 320.67,283.80 321.06,283.52 321.47,283.22 321.89,282.91 322.33,282.58 322.78,282.24 323.25,281.88 323.73,281.50 324.23,281.10 324.75,280.69 325.28,280.26 325.80,279.83 326.32,279.41 326.80,279.02 327.21,278.69 327.49,278.47 327.61,278.40 327.55,278.51 327.31,278.77 326.96,279.15 326.54,279.60 326.08,280.09 325.61,280.58 325.14,281.08 324.69,281.56 324.26,282.04 323.84,282.49 323.45,282.93 323.07,283.36 322.71,283.77 322.37,284.17 322.04,284.55 321.73,284.93 321.43,285.29 321.15,285.64 320.88,285.98 320.62,286.31 320.37,286.63 320.13,286.94 319.91,287.24 319.69,287.54 319.48,287.83 319.28,288.11 319.08,288.39 318.90,288.66 318.72,288.92 318.55,289.18 318.39,289.43 318.23,289.68 318.08,289.92 317.93,290.16 317.79,290.39 317.66,290.62 317.53,290.84 317.41,291.06 317.29,291.28 317.18,291.49 317.07,291.70 316.97,291.90 316.87,292.10 316.78,292.29 316.69,292.48 316.60,292.67 316.52,292.85 316.45,293.03 316.38,293.21 316.31,293.38 316.24,293.55 316.18,293.72 316.12,293.88 316.07,294.04 316.02,294.20 315.98,294.35 315.93,294.50 315.89,294.65 315.86,294.79 315.83,294.93 315.80,295.07 315.77,295.20 315.75,295.33 315.73,295.46 315.71,295.59 315.70,295.71 315.69,295.83 315.68,295.94 315.68,296.05 315.68,296.16 315.68,296.27 315.69,296.37 315.69,296.47 315.70,296.57 315.72,296.67 315.73,296.76 315.75,296.84 315.78,296.93 315.80,297.01 315.83,297.09 315.86,297.16 315.89,297.24 315.93,297.30 315.97,297.37 316.01,297.43 316.05,297.49 316.10,297.55 316.15,297.60 316.20,297.65 316.26,297.69 316.31,297.74 316.37,297.78 316.44,297.81 316.50,297.84 316.57,297.87 316.64,297.90 316.71,297.92 316.79,297.94 316.87,297.95 316.95,297.97 317.03,297.97 317.12,297.98 317.20,297.98 317.30,297.97 317.39,297.96 317.49,297.95 317.59,297.94 317.69,297.92 317.79,297.89 317.90,297.86 318.01,297.83 318.12,297.80 318.24,297.75 318.36,297.71 318.48,297.66 318.60,297.60 318.73,297.54 318.86,297.48 318.99,297.41 319.12,297.34 319.26,297.26 319.40,297.17 319.55,297.08 319.70,296.99 319.85,296.89 320.00,296.78 320.16,296.67 320.32,296.55 320.48,296.42 320.65,296.29 320.82,296.15 321.00,296.01 321.18,295.86 321.36,295.70 321.55,295.53 321.74,295.36 321.93,295.18 322.13,294.99 322.33,294.79 322.54,294.58 322.76,294.36 322.98,294.14 323.20,293.90 323.43,293.65 323.66,293.39 323.91,293.12 324.15,292.83 324.41,292.53 324.67,292.22 324.94,291.89 325.22,291.55 325.51,291.18 325.81,290.80 326.12,290.40 326.44,289.97 326.78,289.52 327.13,289.04 327.50,288.53 327.88,287.98 328.29,287.39 328.73,286.76 329.19,286.07 329.69,285.32 330.23,284.49 330.82,283.56 331.48,282.51 332.23,281.31 333.06,279.94 333.92,278.52 334.40,277.76 333.96,278.55 333.15,280.02 332.37,281.45 331.69,282.71 331.09,283.82 330.57,284.82 330.10,285.73 329.68,286.56 329.30,287.33 328.95,288.05 328.63,288.72 328.33,289.36 328.05,289.96 327.79,290.53 327.55,291.08 327.33,291.60 327.12,292.10 326.92,292.58 326.73,293.05 326.55,293.49 326.39,293.92 326.23,294.34 326.08,294.74 325.94,295.13 325.81,295.51 325.69,295.87 325.57,296.23 325.46,296.58 325.36,296.91 325.26,297.24 325.17,297.55 325.08,297.86 325.00,298.16 324.93,298.45 324.86,298.74 324.79,299.01 324.73,299.28 324.68,299.54 324.62,299.80 324.58,300.04 324.54,300.28 324.50,300.52 324.46,300.74 324.43,300.96 324.41,301.18 324.38,301.38 324.37,301.58 324.35,301.78 324.34,301.97 324.33,302.15 324.33,302.33 324.33,302.50 324.33,302.67 324.33,302.82 324.34,302.98 324.35,303.13 324.37,303.27 324.39,303.40 324.41,303.54 324.43,303.66 324.46,303.78 324.49,303.89 324.52,304.00 324.55,304.10 324.59,304.20 324.63,304.29 324.68,304.38 324.72,304.46 324.77,304.53 324.82,304.60 324.88,304.66 324.93,304.72 324.99,304.77 325.06,304.81 325.12,304.85 325.19,304.88 325.26,304.91 325.33,304.93 325.40,304.95 325.48,304.96 325.55,304.97 325.64,304.96 325.72,304.96 325.80,304.94 325.89,304.92 325.98,304.90 326.07,304.87 326.17,304.83 326.26,304.78 326.36,304.73 326.46,304.68 326.56,304.61 326.67,304.54 326.78,304.46 326.89,304.38 327.00,304.29 327.11,304.19 327.23,304.08 327.35,303.97 327.47,303.85 327.59,303.72 327.71,303.58 327.84,303.44 327.97,303.29 328.10,303.12 328.24,302.95 328.37,302.77 328.51,302.59 328.65,302.39 328.80,302.18 328.94,301.96 329.09,301.73 329.25,301.50 329.40,301.25 329.56,300.98 329.72,300.71 329.88,300.43 330.05,300.13 330.22,299.81 330.39,299.49 330.57,299.14 330.75,298.79 330.93,298.41 331.12,298.02 331.32,297.61 331.51,297.17 331.72,296.72 331.93,296.24 332.14,295.74 332.36,295.20 332.59,294.64 332.83,294.04 333.08,293.40 333.33,292.72 333.60,291.99 333.89,291.20 334.19,290.35 334.51,289.41 334.85,288.37 335.23,287.21 335.65,285.89 336.13,284.35 336.68,282.53 337.30,280.46 337.69,279.14 337.35,280.48 336.79,282.59 336.32,284.44 335.92,286.02 335.59,287.39 335.31,288.60 335.07,289.68 334.85,290.67 334.66,291.58 334.49,292.42 334.33,293.21 334.20,293.94 334.07,294.64 333.96,295.30 333.86,295.92 333.77,296.51 333.68,297.08 333.61,297.62 333.54,298.14 333.48,298.64 333.43,299.11 333.38,299.57 333.34,300.01 333.31,300.43 333.28,300.84 333.25,301.23 333.23,301.61 333.21,301.97 333.20,302.32 333.19,302.66 333.19,302.98 333.19,303.29 333.19,303.59 333.20,303.88 333.21,304.16 333.22,304.43 333.24,304.69 333.26,304.94 333.28,305.17 333.31,305.40 333.34,305.62 333.37,305.83 333.40,306.03 333.44,306.22 333.48,306.40 333.52,306.57 333.56,306.73 333.61,306.88 333.65,307.03 333.70,307.16 333.75,307.29 333.81,307.41 333.86,307.52 333.92,307.62 333.98,307.71 334.04,307.79 334.11,307.86 334.17,307.93 334.24,307.99 334.31,308.04 334.38,308.07 334.45,308.11 334.52,308.13 334.59,308.14 334.67,308.15 334.75,308.14 334.82,308.13 334.90,308.10 334.99,308.07 335.07,308.03 335.15,307.98 335.23,307.93 335.32,307.86 335.41,307.79 335.49,307.70 335.58,307.61 335.67,307.50 335.76,307.39 335.85,307.27 335.94,307.13 336.04,306.99 336.13,306.84 336.23,306.67 336.32,306.50 336.42,306.31 336.51,306.11 336.61,305.91 336.71,305.68 336.81,305.45 336.91,305.20 337.01,304.94 337.11,304.67 337.21,304.38 337.31,304.08 337.41,303.77 337.51,303.43 337.62,303.08 337.72,302.71 337.82,302.33 337.93,301.92 338.03,301.50 338.14,301.05 338.25,300.58 338.35,300.08 338.46,299.56 338.57,299.00 338.68,298.42 338.79,297.80 338.90,297.14 339.01,296.43 339.12,295.68 339.24,294.87 339.36,293.99 339.48,293.04 339.60,292.00 339.73,290.84 339.86,289.53 340.00,288.04 340.16,286.28 340.33,284.15 340.52,281.55 340.66,279.64 340.57,281.58 340.45,284.21 340.37,286.38 340.31,288.18 340.27,289.72 340.25,291.07 340.24,292.28 340.23,293.38 340.24,294.39 340.25,295.32 340.27,296.19 340.29,297.01 340.32,297.77 340.35,298.49 340.38,299.18 340.42,299.83 340.46,300.45 340.51,301.04 340.55,301.60 340.60,302.14 340.66,302.65 340.71,303.15 340.77,303.62 340.83,304.07 340.89,304.51 340.95,304.93 341.01,305.33 341.08,305.71 341.15,306.08 341.21,306.43 341.28,306.77 341.35,307.10 341.43,307.41 341.50,307.71 341.57,307.99 341.65,308.26 341.73,308.52 341.80,308.77 341.88,309.00 341.96,309.23 342.04,309.44 342.12,309.64 342.20,309.83 342.28,310.00 342.36,310.17 342.44,310.32 342.52,310.47 342.60,310.60 342.68,310.72 342.77,310.83 342.85,310.93 342.93,311.02 343.01,311.10 343.09,311.17 343.18,311.23 343.26,311.28 343.34,311.32 343.42,311.35 343.50,311.36 343.58,311.37 343.66,311.37 343.74,311.36 343.82,311.34 343.90,311.31 343.98,311.27 344.06,311.22 344.13,311.16 344.21,311.09 344.28,311.01 344.36,310.92 344.43,310.82 344.50,310.71 344.57,310.59 344.64,310.45 344.71,310.31 344.78,310.15 344.84,309.98 344.91,309.80 344.97,309.61 345.03,309.41 345.09,309.19 345.15,308.96 345.21,308.72 345.26,308.46 345.31,308.19 345.36,307.91 345.41,307.61 345.45,307.30 345.49,306.97 345.53,306.62 345.57,306.26 345.60,305.88 345.63,305.47 345.66,305.05 345.68,304.61 345.70,304.15 345.71,303.66 345.72,303.15 345.73,302.61 345.73,302.04 345.72,301.44 345.71,300.80 345.69,300.13 345.66,299.42 345.63,298.65 345.59,297.84 345.53,296.96 345.46,296.02 345.38,294.99 345.28,293.86 345.16,292.60 345.02,291.19 344.84,289.57 344.61,287.65 344.31,285.27 343.91,282.20 343.54,279.52 343.97,282.22 344.46,285.32 344.86,287.73 345.20,289.69 345.50,291.35 345.78,292.81 346.03,294.11 346.27,295.28 346.50,296.36 346.72,297.36 346.93,298.28 347.13,299.15 347.33,299.97 347.52,300.74 347.71,301.47 347.90,302.16 348.08,302.82 348.26,303.44 348.43,304.04 348.61,304.62 348.78,305.16 348.95,305.69 349.12,306.19 349.28,306.68 349.44,307.14 349.60,307.59 349.76,308.01 349.92,308.42 350.08,308.82 350.23,309.20 350.38,309.56 350.54,309.91 350.68,310.25 350.83,310.57 350.98,310.87 351.12,311.17 351.27,311.45 351.41,311.72 351.55,311.98 351.69,312.22 351.82,312.46 351.96,312.68 352.09,312.89 352.22,313.09 352.35,313.28 352.48,313.46 352.61,313.62 352.73,313.78 352.86,313.92 352.98,314.06 353.10,314.18 353.22,314.30 353.33,314.40 353.44,314.49 353.55,314.58 353.66,314.65 353.77,314.71 353.88,314.77 353.98,314.81 354.08,314.84 354.18,314.87 354.27,314.88 354.36,314.88 354.45,314.88 354.54,314.86 354.63,314.84 354.71,314.80 354.79,314.75 354.87,314.70 354.94,314.63 355.01,314.55 355.08,314.46 355.14,314.37 355.21,314.26 355.26,314.14 355.32,314.01 355.37,313.87 355.42,313.72 355.46,313.56 355.50,313.39 355.54,313.21 355.58,313.02 355.60,312.81 355.63,312.60 355.65,312.37 355.67,312.13 355.68,311.88 355.69,311.62 355.69,311.35 355.69,311.06 355.68,310.76 355.67,310.45 355.66,310.13 355.63,309.79 355.61,309.43 355.57,309.07 355.53,308.68 355.48,308.28 355.43,307.87 355.37,307.44 355.30,306.99 355.23,306.52 355.14,306.04 355.05,305.53 354.95,305.00 354.84,304.45 354.71,303.88 354.58,303.28 354.44,302.65 354.28,301.99 354.10,301.29 353.92,300.56 353.71,299.79 353.49,298.98 353.24,298.11 352.97,297.18 352.67,296.19 352.34,295.11 351.96,293.93 351.54,292.64 351.05,291.18 350.48,289.52 349.79,287.55 348.91,285.11 347.72,281.88 346.55,278.73 347.78,281.86 349.05,285.05 350.01,287.45 350.81,289.38 351.49,291.00 352.10,292.40 352.64,293.65 353.15,294.77 353.62,295.79 354.05,296.73 354.47,297.60 354.86,298.40 355.24,299.16 355.59,299.86 355.94,300.53 356.27,301.16 356.59,301.75 356.90,302.31 357.20,302.85 357.49,303.35 357.77,303.83 358.05,304.29 358.31,304.73 358.57,305.14 358.83,305.54 359.07,305.92 359.31,306.28 359.55,306.62 359.78,306.95 360.00,307.26 360.22,307.55 360.44,307.83 360.64,308.10 360.85,308.35 361.05,308.59 361.24,308.82 361.43,309.03 361.62,309.24 361.80,309.43 361.97,309.61 362.15,309.77 362.31,309.93 362.48,310.08 362.64,310.21 362.79,310.34 362.94,310.45 363.09,310.56 363.23,310.65 363.37,310.73 363.50,310.81 363.63,310.87 363.75,310.93 363.87,310.97 363.99,311.01 364.10,311.03 364.21,311.05 364.31,311.06 364.41,311.06 364.51,311.05 364.60,311.03 364.68,311.00 364.77,310.96 364.84,310.92 364.91,310.86 364.98,310.80 365.04,310.72 365.10,310.64 365.15,310.54 365.19,310.43 365.23,310.31 365.26,310.19 365.29,310.05 365.31,309.90 365.32,309.74 365.33,309.57 365.33,309.39 365.32,309.19 365.31,308.99 365.29,308.78 365.27,308.55 365.23,308.32 365.20,308.07 365.15,307.82 365.10,307.55 365.03,307.27 364.97,306.98 364.89,306.67 364.80,306.36 364.71,306.03 364.61,305.69 364.50,305.34 364.38,304.97 364.25,304.59 364.12,304.20 363.97,303.80 363.81,303.37 363.64,302.94 363.46,302.48 363.27,302.01 363.06,301.53 362.84,301.02 362.61,300.49 362.36,299.95 362.10,299.38 361.82,298.78 361.52,298.16 361.19,297.51 360.85,296.83 360.48,296.12 360.09,295.36 359.66,294.56 359.20,293.71 358.69,292.80 358.14,291.82 357.52,290.75 356.84,289.58 356.06,288.27 355.16,286.77 354.08,285.02 352.73,282.86 350.93,280.03 349.24,277.37 350.98,279.98 352.83,282.75 354.25,284.83 355.40,286.51 356.39,287.91 357.25,289.12 358.03,290.19 358.74,291.16 359.39,292.03 360.00,292.83 360.57,293.56 361.11,294.25 361.62,294.88 362.10,295.48 362.56,296.03 363.00,296.56 363.43,297.05 363.83,297.52 364.23,297.96 364.60,298.37 364.97,298.77 365.32,299.14 365.66,299.50 365.99,299.84 366.31,300.16 366.62,300.46 366.92,300.75 367.21,301.02 367.50,301.28 367.77,301.53 368.04,301.77 368.30,301.99 368.56,302.20 368.80,302.40 369.04,302.59 369.27,302.76 369.50,302.93 369.72,303.09 369.93,303.23 370.14,303.37 370.34,303.50 370.54,303.62 370.73,303.73 370.91,303.83 371.09,303.93 371.26,304.01 371.43,304.09 371.59,304.16 371.75,304.22 371.90,304.27 372.04,304.31 372.18,304.35 372.32,304.38 372.45,304.40 372.57,304.42 372.69,304.43 372.80,304.43 372.90,304.42 373.01,304.41 373.10,304.38 373.19,304.36 373.27,304.32 373.35,304.28 373.42,304.22 373.49,304.17 373.55,304.10 373.60,304.02 373.64,303.94 373.68,303.85 373.71,303.75 373.74,303.65 373.75,303.53 373.76,303.41 373.76,303.27 373.76,303.13 373.74,302.98 373.72,302.82 373.69,302.66 373.64,302.48 373.59,302.29 373.53,302.09 373.46,301.88 373.38,301.67 373.29,301.44 373.19,301.19 373.08,300.94 372.95,300.68 372.81,300.40 372.66,300.11 372.49,299.80 372.31,299.48 372.11,299.14 371.90,298.79 371.67,298.42 371.42,298.04 371.15,297.63 370.86,297.20 370.54,296.75 370.20,296.28 369.84,295.78 369.44,295.25 369.01,294.69 368.54,294.09 368.03,293.46 367.48,292.78 366.87,292.04 366.20,291.25 365.45,290.39 364.62,289.44 363.67,288.38 362.59,287.19 361.31,285.80 359.76,284.15 357.78,282.06 354.96,279.15 351.46,275.57 355.09,279.18 358.08,282.14 360.28,284.28 362.06,285.99 363.58,287.43 364.94,288.69 366.16,289.82 367.29,290.84 368.33,291.78 369.32,292.65 370.25,293.46 371.14,294.22 371.99,294.94 372.80,295.62 373.59,296.27 374.35,296.89 375.09,297.48 375.80,298.05 376.49,298.59 377.17,299.12 377.83,299.62 378.48,300.10 379.11,300.57 379.73,301.02 380.33,301.46 380.93,301.88 381.51,302.29 382.08,302.69 382.65,303.07 383.20,303.45 383.75,303.81 384.28,304.16 384.81,304.50 385.33,304.82 385.84,305.14 386.34,305.45 386.84,305.76 387.33,306.05 387.81,306.33 388.29,306.60 388.76,306.87 389.22,307.13 389.68,307.38 390.13,307.62 390.57,307.86 391.01,308.08 391.44,308.30 391.86,308.52 392.28,308.72 392.70,308.92 393.11,309.11 393.51,309.30 393.90,309.47 394.30,309.64 394.68,309.81 395.06,309.97 395.43,310.12 395.80,310.26 396.16,310.40 396.52,310.53 396.87,310.66 397.22,310.78 397.56,310.89 397.89,311.00 398.22,311.10 398.54,311.20 398.86,311.29 399.17,311.37 399.47,311.45 399.77,311.52 400.07,311.59 400.36,311.65 400.64,311.70 400.91,311.75 401.18,311.80 401.45,311.83 401.71,311.87 401.96,311.89 402.20,311.91 402.44,311.93 402.68,311.94 402.91,311.94 403.13,311.94 403.34,311.93 403.55,311.92 403.75,311.90 403.95,311.88 404.14,311.85 404.32,311.82 404.50,311.78 404.67,311.73 404.83,311.68 404.99,311.63 405.14,311.57 405.27,311.49 405.39,311.41 405.50,311.32 405.60,311.22 405.68,311.11 405.75,310.99 405.81,310.87 405.86,310.73 405.89,310.59 405.92,310.44 405.93,310.28 405.93,310.11 405.92,309.94 405.90,309.76 405.87,309.58 405.83,309.38 405.78,309.19 405.72,308.98 405.65,308.77 405.57,308.56 405.49,308.33 405.39,308.11 405.28,307.88 405.17,307.64 405.05,307.40 404.92,307.16 404.78,306.91 404.64,306.66 404.48,306.40 404.33,306.14 404.16,305.88 403.99,305.62 403.82,305.36 403.64,305.09 403.46,304.82 403.27,304.55 403.08,304.28 402.88,304.01 402.69,303.74 402.49,303.46 402.29,303.19 402.10,302.93 401.90,302.66 401.71,302.39 401.51,302.13 401.33,301.87 401.14,301.62 400.97,301.37 400.80,301.13 400.63,300.89 400.48,300.66 400.34,300.44 400.22,300.22 400.10,300.02 400.01,299.83 399.93,299.64 399.87,299.47 399.83,299.31 399.81,299.16 399.81,299.03 399.84,298.91 399.90,298.81 399.98,298.72 400.09,298.65 400.22,298.59 400.39,298.55 400.58,298.52 400.80,298.51 401.05,298.51 401.32,298.52 401.63,298.56 401.96,298.60 402.31,298.66 402.69,298.73 403.10,298.81 403.52,298.90 403.97,299.00 404.44,299.11 404.93,299.23 405.44,299.35 405.96,299.49 406.50,299.63 407.06,299.77 407.63,299.92 408.21,300.08 408.80,300.24 409.41,300.40 410.03,300.57 410.66,300.74 411.30,300.91 411.95,301.09 412.61,301.26 413.28,301.44 413.95,301.62 414.64,301.81 415.33,301.99 416.03,302.17 416.74,302.36 417.45,302.55 418.17,302.73 418.90,302.92 419.63,303.10 420.36,303.28 421.10,303.47 421.84,303.65 422.58,303.83 423.32,304.00 424.07,304.18 424.82,304.35 425.57,304.53 426.33,304.70 427.08,304.86 427.84,305.03 428.60,305.19 429.36,305.36 430.13,305.52 430.89,305.67 431.65,305.83 432.42,305.98 433.19,306.13 433.96,306.28 434.73,306.42 435.49,306.57 436.26,306.70 437.03,306.84 437.81,306.98 438.58,307.11 439.35,307.24 440.13,307.37 440.95,307.51 441.78,307.65 442.64,307.81 443.52,307.97 444.42,308.13 445.33,308.30 446.25,308.46 447.19,308.63 448.13,308.80 449.08,308.96 450.03,309.13 450.98,309.29 451.93,309.45 452.87,309.60 453.81,309.74 454.74,309.88 455.65,310.01 456.55,310.13 457.44,310.24 458.30,310.33 459.13,310.42 459.95,310.49 460.73,310.55 461.49,310.60 462.22,310.64 462.96,310.67 463.69,310.70 464.42,310.72 465.14,310.75 465.87,310.77 466.59,310.78 467.31,310.79 468.02,310.80 468.74,310.81 469.45,310.81 470.15,310.81 470.86,310.80 471.56,310.79 472.26,310.78 472.95,310.76 473.64,310.74 474.33,310.72 475.02,310.69 475.71,310.67 476.39,310.63 477.06,310.60 477.74,310.56 478.41,310.51 479.08,310.47 479.74,310.42 480.41,310.37 481.07,310.31 481.72,310.25 482.38,310.19 483.03,310.12 483.67,310.05 484.32,309.98 484.96,309.91 485.59,309.83 486.23,309.75 486.86,309.66 487.48,309.58 488.11,309.48 488.73,309.39 489.35,309.29 489.96,309.19 490.57,309.09 491.18,308.98 491.78,308.88 492.38,308.76 492.98,308.65 493.57,308.53 494.16,308.41 494.75,308.29 495.33,308.16 495.91,308.03 496.48,307.90 497.06,307.76 497.63,307.63 498.19,307.49 498.75,307.34 499.31,307.20 499.87,307.05 500.41,306.89 500.94,306.73 501.46,306.57 501.96,306.40 502.46,306.23 502.94,306.05 503.40,305.87 503.86,305.68 504.31,305.49 504.75,305.30 505.19,305.10 505.61,304.90 506.03,304.70 506.44,304.49 506.84,304.28 507.24,304.07 507.64,303.86 508.03,303.64 508.42,303.42 508.80,303.20 509.18,302.98 509.56,302.76 509.93,302.53 510.31,302.31 510.68,302.08 511.06,301.85 511.43,301.62 511.80,301.39 512.17,301.16 512.54,300.92 512.92,300.69 513.29,300.45 513.67,300.22 514.05,299.98 514.43,299.74 514.81,299.50 515.19,299.26 515.58,299.02 515.97,298.78 516.36,298.54 516.75,298.30 517.14,298.05 517.53,297.81 517.92,297.56 518.30,297.31 518.69,297.06 519.07,296.81 519.44,296.56 519.82,296.30 520.19,296.04 520.56,295.79 520.93,295.53 521.29,295.26 521.65,295.00 522.01,294.74 522.36,294.47 522.71,294.20 523.06,293.93 523.40,293.66 523.74,293.39 524.08,293.11 524.41,292.84 524.73,292.56 525.06,292.28 525.38,292.00 525.69,291.71 526.00,291.43 526.31,291.14 526.61,290.86 526.91,290.57 527.21,290.28 527.49,289.99 527.78,289.69 528.06,289.40 528.34,289.10 528.61,288.81 528.88,288.51 529.14,288.21 529.40,287.91 529.65,287.60 529.90,287.30 530.14,286.99 530.38,286.69 530.60,286.38 530.82,286.07 531.04,285.76 531.24,285.44 531.44,285.13 531.64,284.81 531.82,284.50 532.01,284.18 532.18,283.86 532.36,283.54 532.52,283.22 532.69,282.90 532.84,282.58 533.00,282.25 533.15,281.93 533.29,281.61 533.43,281.28 533.57,280.95 533.70,280.63 533.83,280.30 533.95,279.97 534.08,279.64 534.19,279.31 534.31,278.98 534.42,278.65 534.53,278.32 534.63,277.99 534.73,277.66 534.83,277.32 534.93,276.99 535.02,276.66 535.11,276.32 535.20,275.99 535.28,275.66 535.36,275.32 535.44,274.99 535.51,274.65 535.58,274.31 535.65,273.98 535.72,273.64 535.78,273.30 535.84,272.97 535.90,272.63 535.96,272.29 536.01,271.95 536.06,271.61 536.11,271.28 536.15,270.94 536.20,270.60 536.23,270.26 536.27,269.92 536.31,269.58 536.34,269.24 536.36,268.90 536.39,268.56 536.41,268.22 536.43,267.88 536.45,267.54 536.47,267.20 536.48,266.86 536.49,266.52 536.49,266.18 536.50,265.84 536.50,265.50" fill="none" stroke="#000" stroke-width="1"/>
<path d="M341.5 265.5H536" stroke="#50C850" stroke-width="1"/>
<path d="M341.5 265.5L499.9 224.0" stroke="#B833B8" stroke-width="1"/>
<path d="M341.5 265.5L499.9 307.0" stroke="#B833B8" stroke-width="1"/>
<path d="M341.5 265.5L405.0 219.4" stroke="#44C8D8" stroke-width="1"/>
<defs><clipPath id="cl"><rect x="530" y="258" width="6.5" height="14"/></clipPath><clipPath id="cr"><rect x="536.5" y="258" width="8" height="14"/></clipPath></defs>
<circle cx="536.5" cy="265" r="3" fill="#22E022" stroke="#000" stroke-width="1" clip-path="url(#cl)" shape-rendering="auto"/>
<circle cx="536.5" cy="265" r="3" fill="#C8A8C8" stroke="#4A0A50" stroke-width="1" clip-path="url(#cr)" shape-rendering="auto"/>
 </svg>
 <div class="t s11" style="left:13px;top:483px">Elevation Plot</div>
 <div class="t s11" style="left:13px;top:497px">Azimuth Angle</div>
 <div class="t s11" style="left:97px;top:497px">0.0 deg.</div>
 <div class="t s11" style="left:13px;top:511px">Outer Ring</div>
 <div class="t s11" style="left:97px;top:511px">16.71 dBi</div>
 <div class="t s11" style="left:13px;top:539px">Slice Max Gain</div>
 <div class="t s11" style="left:97px;top:539px">16.71 dBi @ Elev Angle = 0.0 deg.</div>
 <div class="t s11" style="left:13px;top:553px">Front/Back</div>
 <div class="t s11" style="left:97px;top:553px">25.27 dB</div>
 <div class="t s11" style="left:13px;top:567px">Beamwidth</div>
 <div class="t s11" style="left:97px;top:567px">29.4 deg.; -3dB @ 345.3, 14.7 deg.</div>
 <div class="t s11" style="left:13px;top:581px">Sidelobe Gain</div>
 <div class="t s11" style="left:97px;top:581px">1.09 dBi @ Elev Angle = 36.0 deg.</div>
 <div class="t s11" style="left:13px;top:595px">Front/Sidelobe</div>
 <div class="t s11" style="left:97px;top:595px">15.62 dB</div>
 <div class="t s11" style="left:521px;top:483px">Cursor Elev</div>
 <div class="t s11" style="left:590px;top:483px">0.0 deg.</div>
 <div class="t s11" style="left:521px;top:497px">Gain</div>
 <div class="t s11" style="left:590px;top:497px">16.71 dBi</div>
 <div class="t s11" style="left:590px;top:511px">0.0 dBmax</div>
</div>
</body></html>
